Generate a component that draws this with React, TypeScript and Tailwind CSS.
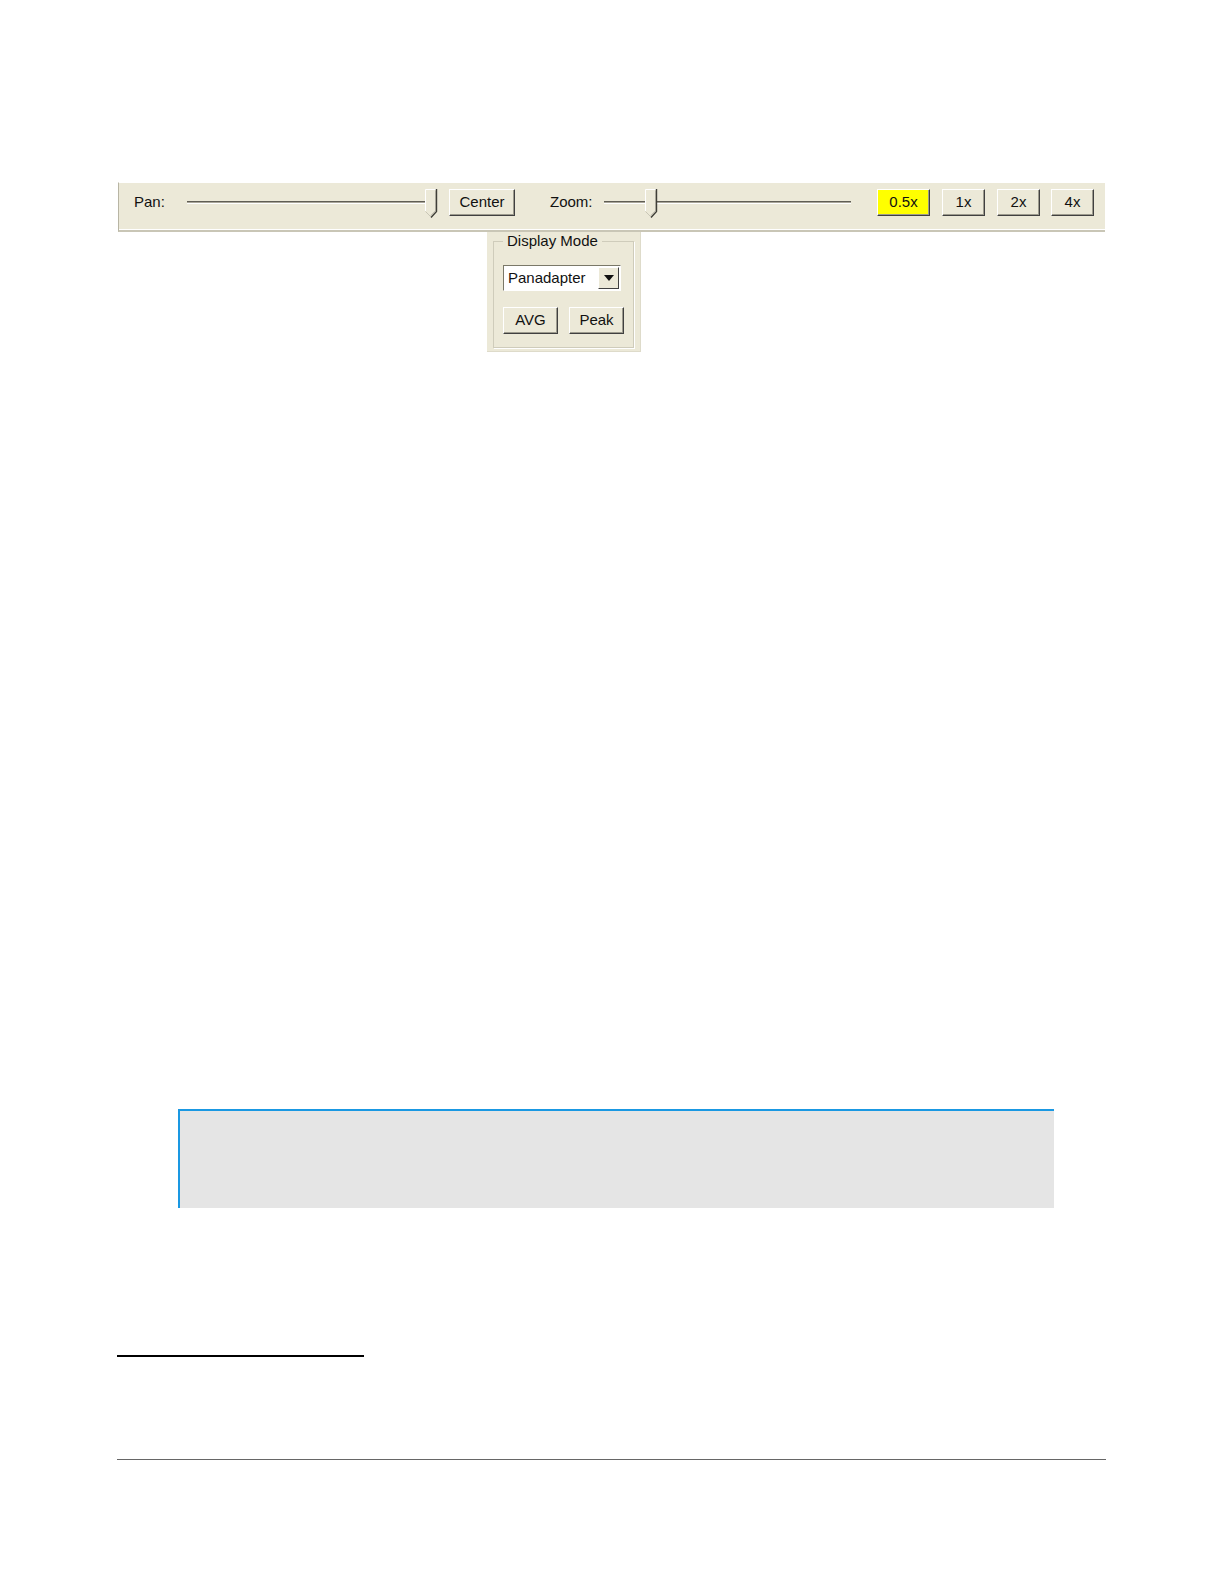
import React from 'react';

const font = { fontFamily: '"Liberation Sans", Arial, sans-serif' };

function XpButton({ label, className = '', yellow = false }: { label: string; className?: string; yellow?: boolean }) {
  return (
    <div
      className={`flex h-[27px] items-center justify-center border border-t-white border-l-white border-b-[#404040] border-r-[#404040] text-[15px] text-[#111] shadow-[inset_-1px_-1px_0_#9d9b8e] ${
        yellow ? 'bg-[#ffff00]' : 'bg-[#ece9d8]'
      } ${className}`}
    >
      {label}
    </div>
  );
}

function Slider({ width, trackEnd, thumb }: { width: number; trackEnd: number; thumb: number }) {
  const t = thumb;
  return (
    <svg width={width} height={34} viewBox={`0 0 ${width} 34`} className="block">
      <line x1={4} y1={15.5} x2={trackEnd} y2={15.5} stroke="#5f5d54" strokeWidth={1} />
      <line x1={4} y1={16.5} x2={trackEnd} y2={16.5} stroke="#a9a699" strokeWidth={1} />
      <line x1={4} y1={17.5} x2={trackEnd} y2={17.5} stroke="#ffffff" strokeWidth={1} />
      {/* thumb */}
      <path d={`M${t} 3 H${t + 12} V25 L${t + 6} 31 L${t} 25 Z`} fill="#ece9d8" />
      <path d={`M${t + 0.5} 25 V3.5 H${t + 11}`} fill="none" stroke="#ffffff" strokeWidth={1} />
      <path d={`M${t + 0.5} 25.5 L${t + 5.5} 30.5`} fill="none" stroke="#c9c6b6" strokeWidth={1} />
      <path d={`M${t + 11.5} 3 V25.5 L${t + 6} 31.5`} fill="none" stroke="#3f3e38" strokeWidth={1.4} />
      <path d={`M${t + 10.5} 4.5 V25 L${t + 6} 29.5`} fill="none" stroke="#a9a699" strokeWidth={1} />
    </svg>
  );
}

export default function App() {
  return (
    <div className="h-[1584px] w-full overflow-hidden bg-white" style={font}>
      <div className="pt-[182px] pl-[118px]">
        {/* Toolbar */}
        <div className="h-[50px] w-[987px] border-t border-l border-t-white border-l-[#b8b5a4] border-b-2 border-b-[#c9c6b6] bg-[#ece9d8] pt-[6px] shadow-[inset_0_-1px_0_#fff]">
          <div className="flex h-[27px] items-center">
            <span className="ml-[15px] w-[49px] text-[15px] text-[#111]">Pan:</span>
            <Slider width={262} trackEnd={247} thumb={242} />
            <XpButton label="Center" className="ml-[4px] w-[66px]" />
            <span className="ml-[35px] w-[50px] text-[15px] text-[#111]">Zoom:</span>
            <Slider width={262} trackEnd={251} thumb={45} />
            <XpButton label="0.5x" yellow className="ml-[15px] w-[53px]" />
            <XpButton label="1x" className="ml-[12px] w-[43px]" />
            <XpButton label="2x" className="ml-[12px] w-[43px]" />
            <XpButton label="4x" className="ml-[11px] w-[43px]" />
          </div>
        </div>

        {/* Display Mode panel */}
        <div className="ml-[369px] h-[120px] w-[154px] border-r border-b border-r-[#dedbca] border-b-[#dedbca] bg-[#ece9d8] px-[6px]">
          <fieldset className="h-[116px] w-[141px] border border-[#cfccbb] px-[9px] pt-[4px] shadow-[1px_1px_0_#fff]">
            <legend className="px-[4px] text-[15px] leading-[18px] text-[#111]">Display Mode</legend>
            <div className="mt-[11px] flex h-[26px] w-[118px] items-center border border-t-[#7a7868] border-l-[#7a7868] border-b-white border-r-white bg-white">
              <span className="flex-1 pl-[4px] text-[15px] text-[#111]">Panadapter</span>
              <div className="mr-[1px] flex h-[22px] w-[21px] items-center justify-center border border-t-white border-l-white border-b-[#404040] border-r-[#404040] bg-[#ece9d8]">
                <svg width="10" height="6" viewBox="0 0 10 6">
                  <path d="M0 0 H10 L5 6 Z" fill="#111" />
                </svg>
              </div>
            </div>
            <div className="mt-[16px] flex gap-[11px]">
              <XpButton label="AVG" className="w-[55px]" />
              <XpButton label="Peak" className="w-[55px]" />
            </div>
          </fieldset>
        </div>
      </div>

      {/* Note box */}
      <div className="mt-[757px] ml-[178px] h-[99px] w-[876px] border-t-2 border-l-2 border-[#1a98e2] bg-[#e5e5e5]" />

      {/* Footnote rule */}
      <div className="mt-[147px] ml-[117px] h-[2px] w-[247px] bg-black" />

      {/* Footer rule */}
      <div className="mt-[102px] ml-[117px] h-px w-[989px] bg-[#666]" />
    </div>
  );
}
